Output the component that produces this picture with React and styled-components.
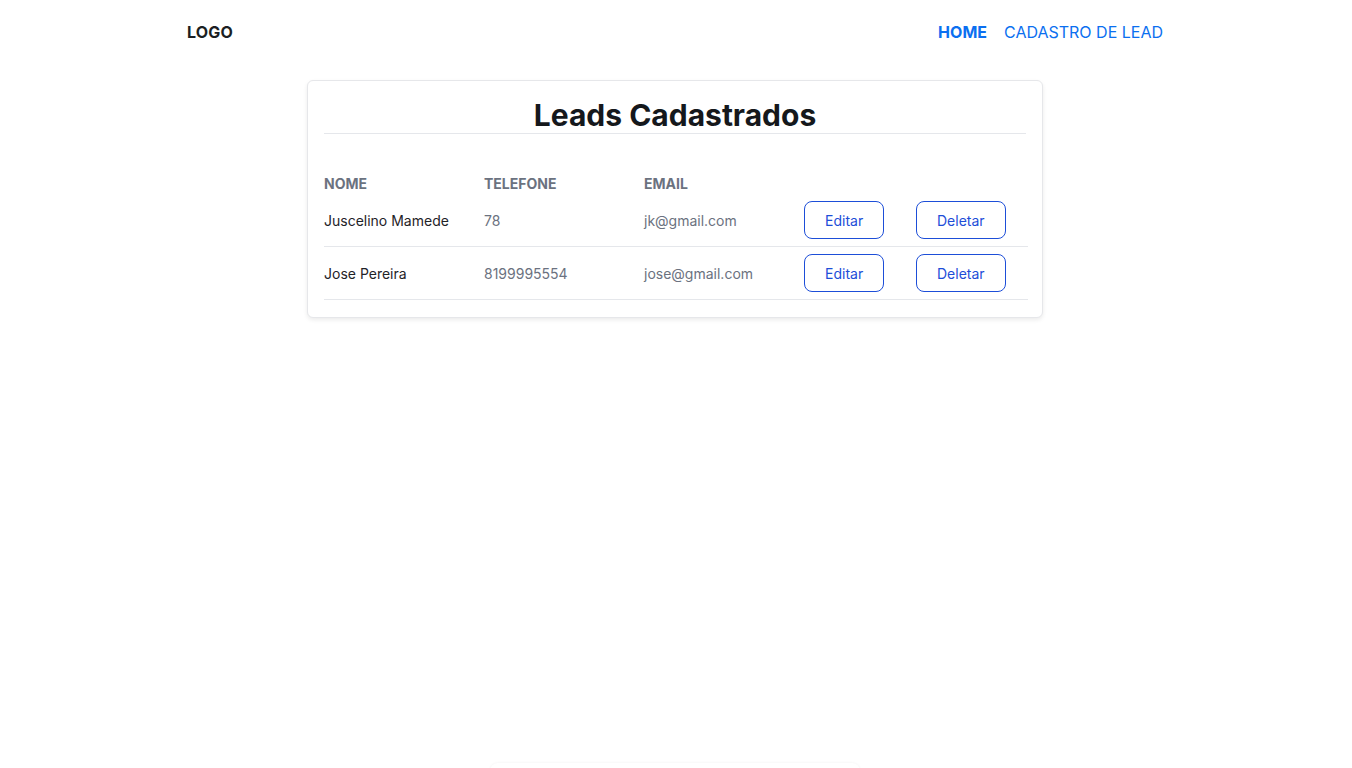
import React from 'react';
import styled, { createGlobalStyle } from 'styled-components';

const GlobalStyle = createGlobalStyle`
	html, body {
		margin: 0;
		padding: 0;
		background: #fff;
		font-family: Inter, "Noto Sans", sans-serif;
		color: #1f2328;
	}
	::-webkit-scrollbar {
		width: 3px;
	}
	::-webkit-scrollbar-track {
		background: #f1f1f1;
	}
	::-webkit-scrollbar-thumb {
		background: #c1c1c1;
	}
`;

const Page = styled.div`
	min-height: 880px;
	padding-right: 2px;
	display: flex;
	flex-direction: column;
	align-items: center;
`;

const Header = styled.header`
	width: 976px;
	height: 64px;
	display: flex;
	align-items: center;
	justify-content: space-between;
`;

const Logo = styled.div`
	font-size: 16px;
	font-weight: 700;
	color: #1b1f23;
	letter-spacing: 0.2px;
`;

const Nav = styled.nav`
	display: flex;
	gap: 17px;
`;

const NavLink = styled.a`
	font-size: 16px;
	color: #0b6ff0;
	font-weight: ${p => (p.active ? 700 : 400)};
	text-decoration: none;
	cursor: pointer;
`;

const Card = styled.section`
	width: 736px;
	box-sizing: border-box;
	margin-top: 16px;
	padding: 16px 16px 17px;
	border: 1px solid #e6e7ea;
	border-radius: 6px;
	box-shadow: 0 2px 4px rgba(0, 0, 0, 0.08);
	background: #fff;
`;

const Title = styled.h1`
	margin: 0;
	height: 36px;
	line-height: 36px;
	font-size: 30px;
	font-weight: 700;
	text-align: center;
	color: #15181c;
	border-bottom: 1px solid #e5e7eb;
`;

const Table = styled.div`
	margin-top: 40px;
	display: grid;
	grid-template-columns: 160px 160px 160px 112px 112px;
`;

const HeadCell = styled.div`
	height: 20px;
	line-height: 20px;
	font-size: 14px;
	font-weight: 700;
	color: #6b7280;
	text-transform: uppercase;
`;

const Cell = styled.div`
	height: 52px;
	display: flex;
	align-items: center;
	font-size: 14px;
	color: ${p => (p.muted ? '#6b7280' : '#1f2328')};
	border-bottom: 1px solid #e5e7eb;
`;

const ActionButton = styled.button`
	height: 38px;
	padding: 0 20px;
	background: #fff;
	border: 1px solid #1d4ed8;
	border-radius: 8px;
	color: #1d4ed8;
	font-family: Inter, "Noto Sans", sans-serif;
	font-size: 14px;
	cursor: pointer;
`;

const FormCard = styled.div`
	width: 370px;
	height: 90px;
	margin-top: 445px;
	border-radius: 8px;
	box-shadow: 0 0 3px rgba(0, 0, 0, 0.06);
	background: #fff;
`;

const leads = [
	{ nome: 'Juscelino Mamede', telefone: '78', email: 'jk@gmail.com' },
	{ nome: 'Jose Pereira', telefone: '8199995554', email: 'jose@gmail.com' },
];

export default function App() {
	return (
		<>
			<GlobalStyle />
			<Page>
				<Header>
					<Logo>LOGO</Logo>
					<Nav>
						<NavLink active>HOME</NavLink>
						<NavLink>CADASTRO DE LEAD</NavLink>
					</Nav>
				</Header>
				<Card>
					<Title>Leads Cadastrados</Title>
					<Table>
						<HeadCell>Nome</HeadCell>
						<HeadCell>Telefone</HeadCell>
						<HeadCell>Email</HeadCell>
						<HeadCell />
						<HeadCell />
						{leads.map(lead => (
							<React.Fragment key={lead.email}>
								<Cell>{lead.nome}</Cell>
								<Cell muted>{lead.telefone}</Cell>
								<Cell muted>{lead.email}</Cell>
								<Cell><ActionButton>Editar</ActionButton></Cell>
								<Cell><ActionButton>Deletar</ActionButton></Cell>
							</React.Fragment>
						))}
					</Table>
				</Card>
				<FormCard />
			</Page>
		</>
	);
}
